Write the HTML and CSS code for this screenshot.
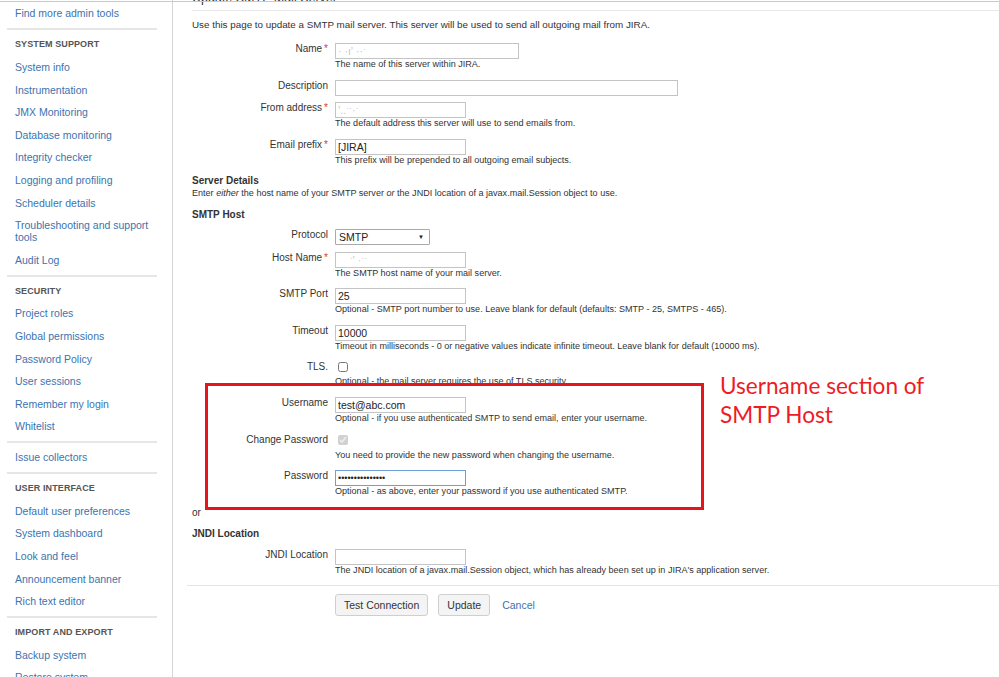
FILE: index.html
```html
<!DOCTYPE html>
<html lang="en">
<head>
    <meta charset="UTF-8">
    <title>Update SMTP Mail Server</title>
    <link rel="stylesheet" href="styles.css">
</head>
<body>
    <div class="top-rule"></div>

    <div class="page">
        <nav class="admin-nav">
            <ul class="nav-group">
                <li><a href="#">Find more admin tools</a></li>
            </ul>
            <ul class="nav-group">
                <li class="nav-heading">System support</li>
                <li><a href="#">System info</a></li>
                <li><a href="#">Instrumentation</a></li>
                <li><a href="#">JMX Monitoring</a></li>
                <li><a href="#">Database monitoring</a></li>
                <li><a href="#">Integrity checker</a></li>
                <li><a href="#">Logging and profiling</a></li>
                <li><a href="#">Scheduler details</a></li>
                <li><a href="#">Troubleshooting and support tools</a></li>
                <li><a href="#">Audit Log</a></li>
            </ul>
            <ul class="nav-group">
                <li class="nav-heading">Security</li>
                <li><a href="#">Project roles</a></li>
                <li><a href="#">Global permissions</a></li>
                <li><a href="#">Password Policy</a></li>
                <li><a href="#">User sessions</a></li>
                <li><a href="#">Remember my login</a></li>
                <li><a href="#">Whitelist</a></li>
            </ul>
            <ul class="nav-group">
                <li><a href="#">Issue collectors</a></li>
            </ul>
            <ul class="nav-group">
                <li class="nav-heading">User interface</li>
                <li><a href="#">Default user preferences</a></li>
                <li><a href="#">System dashboard</a></li>
                <li><a href="#">Look and feel</a></li>
                <li><a href="#">Announcement banner</a></li>
                <li><a href="#">Rich text editor</a></li>
            </ul>
            <ul class="nav-group">
                <li class="nav-heading">Import and export</li>
                <li><a href="#">Backup system</a></li>
                <li><a href="#">Restore system</a></li>
            </ul>
        </nav>

        <main class="content">
            <h2 class="page-title">Update SMTP Mail Server</h2>
            <p class="intro">Use this page to update a SMTP mail server. This server will be used to send all outgoing mail from JIRA.</p>

            <form class="mail-form">
                <div class="field">
                    <label class="field-label">Name<span class="req">*</span></label>
                    <div class="field-body">
                        <input class="text medium blurred" type="text" value="· ·ıʼ ··ˑ">
                        <div class="desc">The name of this server within JIRA.</div>
                    </div>
                </div>
                <div class="field">
                    <label class="field-label">Description</label>
                    <div class="field-body">
                        <input class="text long" type="text" value="">
                    </div>
                </div>
                <div class="field">
                    <label class="field-label">From address<span class="req">*</span></label>
                    <div class="field-body">
                        <input class="text short blurred" type="text" value="ʼ..ˑˑ·ˑ">
                        <div class="desc">The default address this server will use to send emails from.</div>
                    </div>
                </div>
                <div class="field">
                    <label class="field-label">Email prefix<span class="req">*</span></label>
                    <div class="field-body">
                        <input class="text short" type="text" value="[JIRA]">
                        <div class="desc">This prefix will be prepended to all outgoing email subjects.</div>
                    </div>
                </div>

                <h3 class="section-title">Server Details</h3>
                <div class="section-desc">Enter <em>either</em> the host name of your SMTP server <em>or</em> the JNDI location of a javax.mail.Session object to use.</div>

                <h3 class="section-title sub">SMTP Host</h3>
                <div class="field">
                    <label class="field-label">Protocol</label>
                    <div class="field-body">
                        <div class="select">SMTP<span class="caret">▼</span></div>
                    </div>
                </div>
                <div class="field">
                    <label class="field-label">Host Name<span class="req">*</span></label>
                    <div class="field-body">
                        <input class="text short blurred" type="text" value="    ˑʼ ·ˑˑ">
                        <div class="desc">The SMTP host name of your mail server.</div>
                    </div>
                </div>
                <div class="field">
                    <label class="field-label">SMTP Port</label>
                    <div class="field-body">
                        <input class="text short" type="text" value="25">
                        <div class="desc">Optional - SMTP port number to use. Leave blank for default (defaults: SMTP - 25, SMTPS - 465).</div>
                    </div>
                </div>
                <div class="field">
                    <label class="field-label">Timeout</label>
                    <div class="field-body">
                        <input class="text short" type="text" value="10000">
                        <div class="desc">Timeout in milliseconds - 0 or negative values indicate infinite timeout. Leave blank for default (10000 ms).</div>
                    </div>
                </div>
                <div class="field">
                    <label class="field-label">TLS.</label>
                    <div class="field-body">
                        <input class="check" type="checkbox">
                        <div class="desc after-check">Optional - the mail server requires the use of TLS security.</div>
                    </div>
                </div>
                <div class="field">
                    <label class="field-label">Username</label>
                    <div class="field-body">
                        <input class="text short" type="text" value="test@abc.com">
                        <div class="desc">Optional - if you use authenticated SMTP to send email, enter your username.</div>
                    </div>
                </div>
                <div class="field">
                    <label class="field-label">Change Password</label>
                    <div class="field-body">
                        <input class="check" type="checkbox" checked disabled>
                        <div class="desc after-check wide">You need to provide the new password when changing the username.</div>
                    </div>
                </div>
                <div class="field">
                    <label class="field-label">Password</label>
                    <div class="field-body">
                        <input class="text short focused" type="password" value="passwordpasswor">
                        <div class="desc">Optional - as above, enter your password if you use authenticated SMTP.</div>
                    </div>
                </div>

                <div class="or-text">or</div>

                <h3 class="section-title jndi">JNDI Location</h3>
                <div class="field">
                    <label class="field-label">JNDI Location</label>
                    <div class="field-body">
                        <input class="text short" type="text" value="">
                        <div class="desc">The JNDI location of a javax.mail.Session object, which has already been set up in JIRA's application server.</div>
                    </div>
                </div>

                <div class="buttons">
                    <button class="btn" type="button">Test Connection</button>
                    <button class="btn" type="button">Update</button>
                    <a class="cancel" href="#">Cancel</a>
                </div>
            </form>
        </main>
    </div>

    <!-- annotation drawn over the screenshot -->
    <div class="callout-box"></div>
    <div class="callout-text">Username section of<br>SMTP Host</div>
</body>
</html>
```

FILE: styles.css
```css
html, body {
    margin: 0;
    padding: 0;
    background: #fff;
}

body {
    font-family: "Liberation Sans", Arial, sans-serif;
    color: #333;
    overflow: hidden;
    height: 677px;
}

.top-rule {
    position: fixed;
    top: 1px;
    left: 0;
    right: 0;
    height: 1px;
    background: #c9c9c9;
    z-index: 5;
}

.page {
    display: flex;
    align-items: stretch;
    min-height: 677px;
}

/* ---- sidebar ---- */

.admin-nav {
    width: 172px;
    flex: none;
    border-right: 1px solid #d5d5d5;
    padding-top: 2.2px;
}

.nav-group {
    list-style: none;
    margin: 0 15px 0 7px;
    padding: 0;
}

.nav-group + .nav-group {
    border-top: 2px solid #e6e6e6;
    margin-top: 3.7px;
    padding-top: 2.7px;
}

.nav-group li {
    padding: 5.3px 0 5.3px 8px;
    font-size: 10.5px;
    line-height: 12px;
}

.nav-group a {
    color: #3b73af;
    text-decoration: none;
}

.nav-heading {
    text-transform: uppercase;
    font-weight: bold;
    color: #555;
    font-size: 9px !important;
    letter-spacing: 0.1px;
}

/* ---- main ---- */

.content {
    flex: 1;
    padding-left: 19px;
    min-width: 0;
}

.page-title {
    margin: -10px 0 0;
    padding-bottom: 4px;
    font-size: 12.5px;
    line-height: 16px;
    font-weight: normal;
    color: #333;
    border-bottom: 1px solid #e8e8e8;
}

.intro {
    margin: 8px 0 13px;
    font-size: 9.83px;
    line-height: 11px;
}

.mail-form {
    margin: 0;
}

.field {
    display: flex;
    margin-bottom: 6.6px;
}

.field-label {
    width: 136px;
    flex: none;
    text-align: right;
    font-size: 10px;
    line-height: 11px;
}

.req {
    color: #d04437;
    margin-left: 2px;
}

.field-body {
    margin-left: 7px;
    display: flex;
    flex-direction: column;
    align-items: flex-start;
}

.text {
    box-sizing: border-box;
    height: 16px;
    margin: 0;
    padding: 0 2px;
    border: 1px solid #c4c4c4;
    font-family: "Liberation Sans", Arial, sans-serif;
    font-size: 10.5px;
    color: #222;
    outline: none;
}

.text.short { width: 131px; }
.text.medium { width: 184px; }
.text.long { width: 343px; }

.text.blurred {
    color: #c5c5c5;
}

.text.focused {
    border-color: #6ea0d8;
    font-size: 9px;
}

.desc {
    font-size: 9.05px;
    line-height: 11px;
    margin-bottom: 3px;
    white-space: nowrap;
}

.check {
    width: 10px;
    height: 10px;
    margin: 1px 0 0 3px;
}

.desc.after-check {
    margin-top: 4px;
}

.desc.after-check.wide {
    margin-top: 5px;
}

.select {
    box-sizing: border-box;
    width: 95px;
    height: 16px;
    border: 1px solid #a9a9a9;
    border-radius: 1px;
    padding: 0 3px;
    font-size: 10.5px;
    line-height: 14px;
    display: flex;
    justify-content: space-between;
    color: #222;
}

.caret {
    font-size: 6px;
    line-height: 14px;
    margin-right: 2px;
}

.section-title {
    margin: 0;
    font-size: 10px;
    line-height: 11px;
    font-weight: bold;
}

.section-title.sub {
    margin-top: 10px;
    margin-bottom: 8.6px;
}

.section-title.jndi {
    margin-top: 10px;
    margin-bottom: 10px;
}

.section-desc {
    margin-top: 2px;
    font-size: 9.05px;
    line-height: 11px;
}

.or-text {
    font-size: 10px;
    line-height: 11px;
}

.buttons {
    display: flex;
    align-items: center;
    margin-left: -5px;
    padding: 8px 0 0 148px;
    border-top: 1px solid #e3e3e3;
}

.btn {
    height: 22px;
    margin: 0 10px 0 0;
    padding: 0 8px;
    background: #f4f4f4;
    border: 1px solid #cfcfcf;
    border-radius: 3px;
    font-family: "Liberation Sans", Arial, sans-serif;
    font-size: 10.5px;
    color: #333;
}

.cancel {
    margin-left: 2px;
    font-size: 10.5px;
    color: #3b73af;
    text-decoration: none;
}

/* ---- annotation ---- */

.callout-box {
    position: absolute;
    left: 205px;
    top: 383px;
    width: 499px;
    height: 127px;
    box-sizing: border-box;
    border: 3px solid #e8141c;
}

.callout-text {
    position: absolute;
    left: 720px;
    top: 371px;
    font-family: Lato, "Open Sans", sans-serif;
    font-size: 22.6px;
    line-height: 29px;
    color: #ee1c25;
}
```
